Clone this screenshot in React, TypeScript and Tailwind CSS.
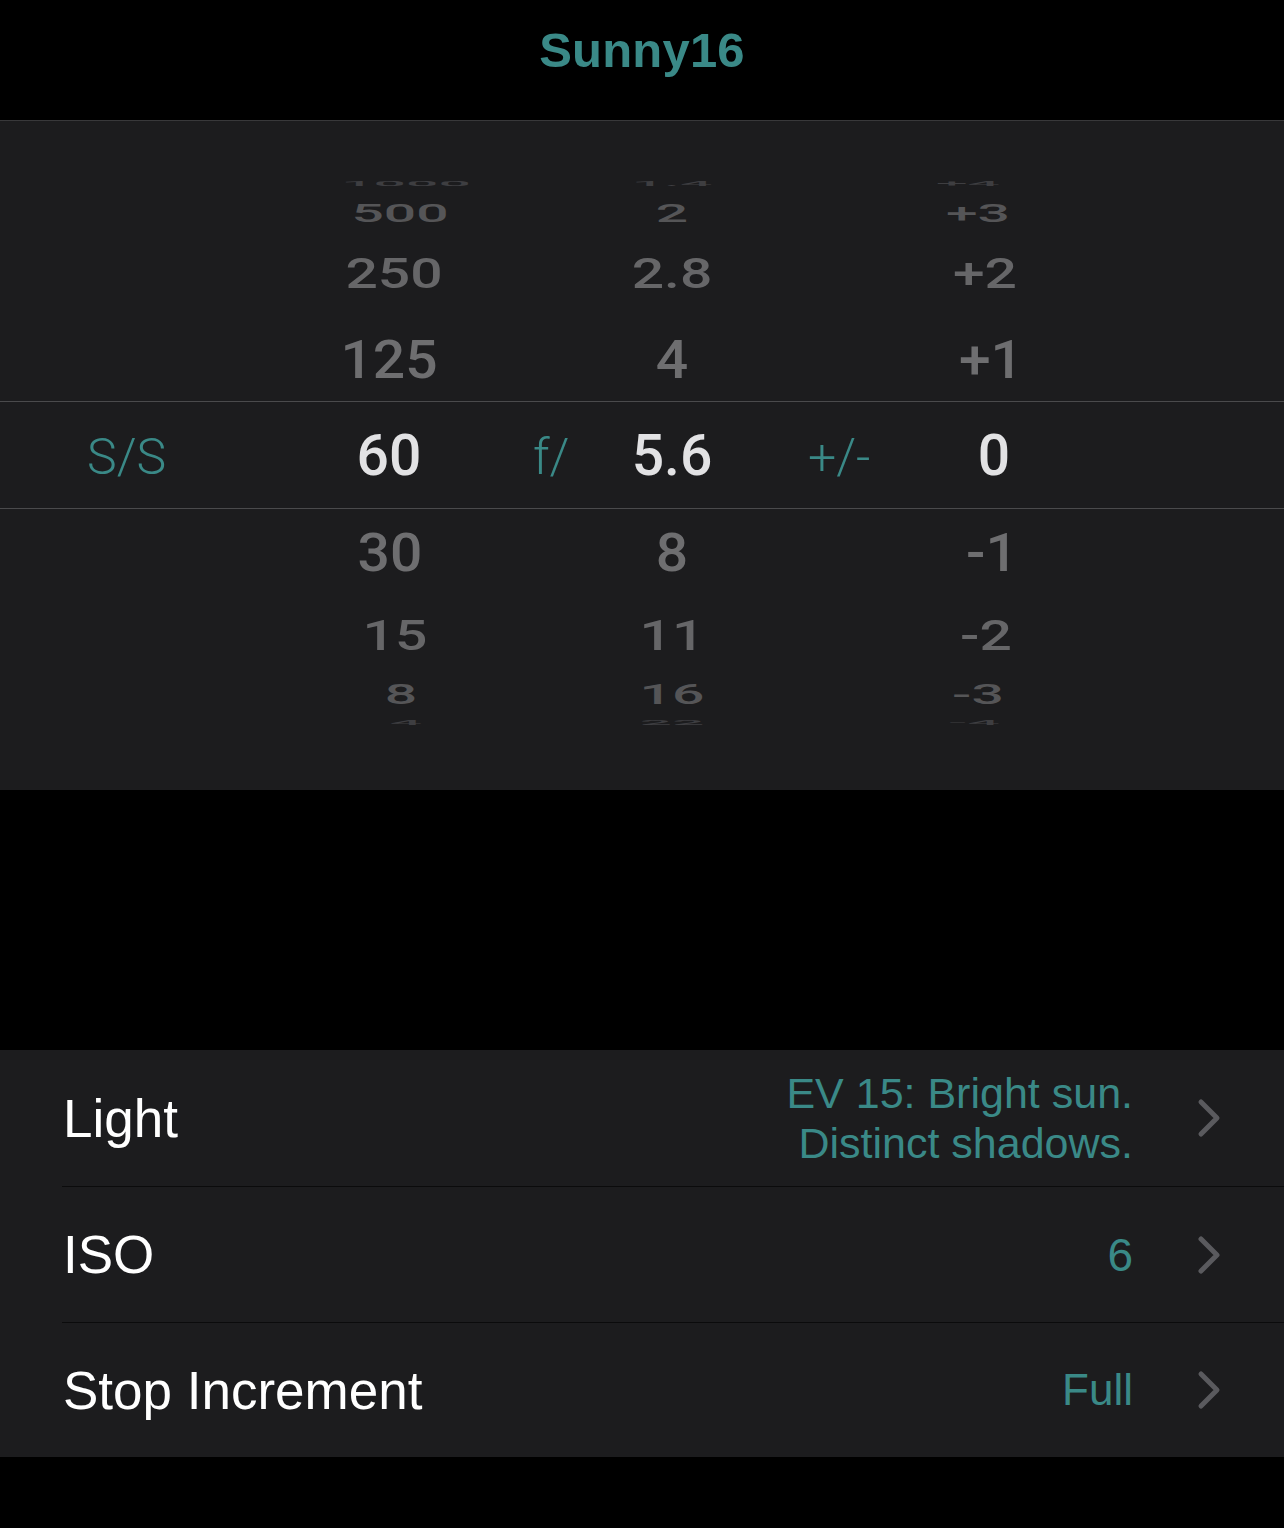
import React from "react";

const TEAL = "text-[#3a8987]";

type Item = { t: string; cls: string };

const topRows: { h: string; items: Item[] }[] = [
  {
    h: "h-[30px]",
    items: [
      { t: "1000", cls: "scale-y-[0.14] text-[#3e3e41] translate-x-[14px]" },
      { t: "1.4", cls: "scale-y-[0.14] text-[#3e3e41]" },
      { t: "+4", cls: "scale-y-[0.14] text-[#3e3e41] -translate-x-[22px]" },
    ],
  },
  {
    h: "h-[30px]",
    items: [
      { t: "500", cls: "scale-y-[0.45] text-[#555557] translate-x-[8px]" },
      { t: "2", cls: "scale-y-[0.45] text-[#555557]" },
      { t: "+3", cls: "scale-y-[0.45] text-[#555557] -translate-x-[12px]" },
    ],
  },
  {
    h: "h-[90px]",
    items: [
      { t: "250", cls: "scale-y-[0.75] text-[#666668] translate-x-[2px]" },
      { t: "2.8", cls: "scale-y-[0.75] text-[#666668]" },
      { t: "+2", cls: "scale-y-[0.75] text-[#666668] -translate-x-[5px]" },
    ],
  },
  {
    h: "h-[83px]",
    items: [
      { t: "125", cls: "scale-y-[0.95] text-[#6e6e70] -translate-x-[3px]" },
      { t: "4", cls: "scale-y-[0.95] text-[#6e6e70]" },
      { t: "+1", cls: "scale-y-[0.95] text-[#6e6e70] translate-x-[1px]" },
    ],
  },
];

const bottomRows: { h: string; items: Item[] }[] = [
  {
    h: "h-[86px]",
    items: [
      { t: "30", cls: "scale-y-[0.95] text-[#6e6e70] -translate-x-[2px]" },
      { t: "8", cls: "scale-y-[0.95] text-[#6e6e70]" },
      { t: "-1", cls: "scale-y-[0.95] text-[#6e6e70] translate-x-[2px]" },
    ],
  },
  {
    h: "h-[80px]",
    items: [
      { t: "15", cls: "scale-y-[0.75] text-[#666668] translate-x-[3px]" },
      { t: "11", cls: "scale-y-[0.75] text-[#666668]" },
      { t: "-2", cls: "scale-y-[0.75] text-[#666668] -translate-x-[4px]" },
    ],
  },
  {
    h: "h-[38px]",
    items: [
      { t: "8", cls: "scale-y-[0.5] text-[#555557] translate-x-[9px]" },
      { t: "16", cls: "scale-y-[0.5] text-[#555557]" },
      { t: "-3", cls: "scale-y-[0.5] text-[#555557] -translate-x-[12px]" },
    ],
  },
  {
    h: "h-[18px]",
    items: [
      { t: "4", cls: "scale-y-[0.12] text-[#3e3e41] translate-x-[14px]" },
      { t: "22", cls: "scale-y-[0.12] text-[#3e3e41]" },
      { t: "-4", cls: "scale-y-[0.12] text-[#3e3e41] -translate-x-[16px]" },
    ],
  },
];

function Cell({ item }: { item: Item }) {
  return (
    <div className="w-[200px] flex items-center justify-center">
      <span className={"block leading-none " + item.cls}>{item.t}</span>
    </div>
  );
}

function WheelRow({ h, items }: { h: string; items: Item[] }) {
  return (
    <div className={"flex items-center pl-[292px] " + h}>
      <Cell item={items[0]} />
      <div className="w-[80px]" />
      <Cell item={items[1]} />
      <div className="w-[118px]" />
      <Cell item={items[2]} />
    </div>
  );
}

function Chevron() {
  return (
    <svg width="26" height="42" viewBox="0 0 26 42" className="shrink-0">
      <path
        d="M5 5 L21 21 L5 37"
        fill="none"
        stroke="#5a5a5e"
        strokeWidth="5"
        strokeLinecap="round"
        strokeLinejoin="round"
      />
    </svg>
  );
}

function ListRow({
  label,
  value,
  h,
}: {
  label: string;
  value: React.ReactNode;
  h: string;
}) {
  return (
    <div className={"flex items-center pl-[63px] pr-[62px] " + h}>
      <div className="flex-1 text-white text-[53px] leading-none">{label}</div>
      <div className={"text-right " + TEAL}>{value}</div>
      <div className="w-[89px] flex justify-end">
        <Chevron />
      </div>
    </div>
  );
}

const LABEL = "text-[50px] font-light leading-none " + TEAL;

export default function App() {
  return (
    <div
      className="w-[1284px] h-[1528px] bg-black flex flex-col"
      style={{ fontFamily: '"Liberation Sans", Arial, sans-serif' }}
    >
      {/* Header */}
      <div className="h-[121px] shrink-0 flex justify-center pt-[26px] border-b border-[#38383a]">
        <div className={"text-[49px] font-bold leading-none tracking-[0.2px] " + TEAL}>
          Sunny16
        </div>
      </div>

      {/* Picker */}
      <div
        className="h-[669px] shrink-0 bg-[#1c1c1e] pt-[47px] flex flex-col text-[57px] font-medium"
        style={{ fontFamily: "Roboto, sans-serif" }}
      >
        {topRows.map((r, i) => (
          <WheelRow key={"t" + i} h={r.h} items={r.items} />
        ))}
        <div className="h-[108px] border-y border-[#4a4a4c] flex items-center">
          <div className="w-[292px] pl-[87px]">
            <span className={LABEL}>S/S</span>
          </div>
          <div className="w-[200px] flex justify-center text-[#e2e2e4] leading-none -translate-x-[3px]">
            60
          </div>
          <div className="w-[80px] pl-[41px]">
            <span className={LABEL}>f/</span>
          </div>
          <div className="w-[200px] flex justify-center text-[#e2e2e4] leading-none">
            5.6
          </div>
          <div className="w-[118px] pl-[36px]">
            <span className={LABEL}>+/-</span>
          </div>
          <div className="w-[200px] flex justify-center text-[#e2e2e4] leading-none translate-x-[4px]">
            0
          </div>
        </div>
        {bottomRows.map((r, i) => (
          <WheelRow key={"b" + i} h={r.h} items={r.items} />
        ))}
      </div>

      {/* Black gap */}
      <div className="h-[260px] shrink-0" />

      {/* List */}
      <div className="bg-[#1c1c1e] flex flex-col shrink-0">
        <ListRow
          h="h-[136px]"
          label="Light"
          value={
            <div className="text-[43px] leading-[50px]">
              <div>EV 15: Bright sun.</div>
              <div>Distinct shadows.</div>
            </div>
          }
        />
        <div className="ml-[62px] h-px bg-[#0b0b0c]" />
        <ListRow
          h="h-[135px]"
          label="ISO"
          value={<div className="text-[46px] leading-none">6</div>}
        />
        <div className="ml-[62px] h-px bg-[#0b0b0c]" />
        <ListRow
          h="h-[134px]"
          label="Stop Increment"
          value={<div className="text-[44px] leading-none">Full</div>}
        />
      </div>

      <div className="flex-1 bg-black" />
    </div>
  );
}
